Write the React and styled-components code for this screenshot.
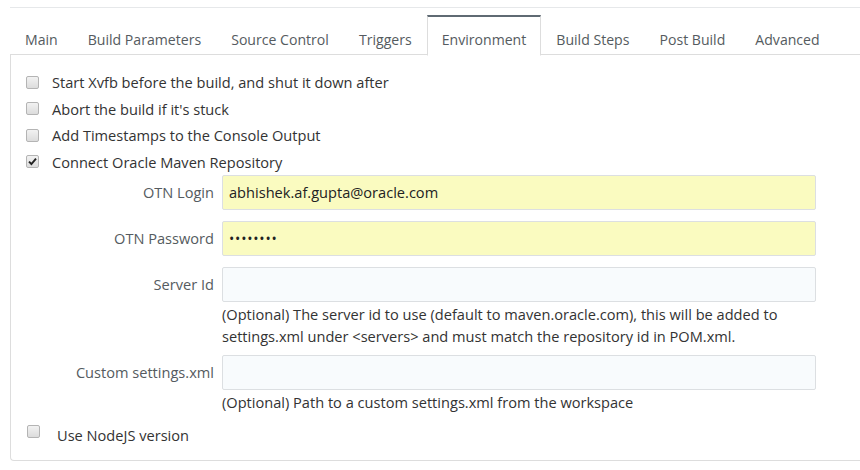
import styled, { createGlobalStyle } from "styled-components";

const GlobalStyle = createGlobalStyle`
    body {
        margin: 0;
        background: #ffffff;
        font-family: 'Open Sans', 'Liberation Sans', sans-serif;
        color: #333333;
    }
`;

const tabs = ["Main", "Build Parameters", "Source Control", "Triggers", "Environment", "Build Steps", "Post Build", "Advanced"];

export default function App() {
    return (
        <Page>
            <GlobalStyle />
            <TopRule />
            <TabBar>
                {tabs.map((t) => (
                    <Tab key={t} $active={t === "Environment"}>{t}</Tab>
                ))}
            </TabBar>
            <Panel>
                <CheckRow><Box /> Start Xvfb before the build, and shut it down after</CheckRow>
                <CheckRow><Box /> Abort the build if it's stuck</CheckRow>
                <CheckRow><Box /> Add Timestamps to the Console Output</CheckRow>
                <CheckRow><Box $checked>
                    <svg width="9" height="9" viewBox="0 0 9 9">
                        <path d="M1 4.6 L3.4 7 L8 1.6" fill="none" stroke="#222" strokeWidth="1.9" />
                    </svg>
                </Box> Connect Oracle Maven Repository</CheckRow>

                <Form>
                    <Label>OTN Login</Label>
                    <Field $filled>abhishek.af.gupta@oracle.com</Field>

                    <Label>OTN Password</Label>
                    <Field $filled $secret>••••••••</Field>

                    <Label>Server Id</Label>
                    <div>
                        <Field />
                        <Help>(Optional) The server id to use (default to maven.oracle.com), this will be added to settings.xml under &lt;servers&gt; and must match the repository id in POM.xml.</Help>
                    </div>

                    <Label>Custom settings.xml</Label>
                    <div>
                        <Field />
                        <Help>(Optional) Path to a custom settings.xml from the workspace</Help>
                    </div>
                </Form>

                <NodeRow><Box /><span>Use NodeJS version</span></NodeRow>
            </Panel>
        </Page>
    );
}

const Page = styled.div`
    padding: 7px 0 0 10px;
    width: 850px;
`;

const TopRule = styled.div`
    border-top: 1px solid #e6e8ea;
`;

const TabBar = styled.div`
    display: flex;
    margin-top: 7px;
    border-bottom: 1px solid #dddddd;
    height: 40px;
    box-sizing: border-box;
`;

const Tab = styled.div`
    box-sizing: border-box;
    height: 40px;
    padding: 13px 14px 0;
    border: 1px solid transparent;
    border-top: 2px solid transparent;
    font-size: 14.1px;
    line-height: 20px;
    color: #555b60;
    white-space: nowrap;
    ${(p) => p.$active && `
        border-color: #dddddd;
        border-top-color: #5f6a73;
        border-bottom: 1px solid #ffffff;
        height: 41px;
        margin-bottom: -1px;
        background: #ffffff;
    `}
`;

const Panel = styled.div`
    border-left: 1px solid #dddddd;
    border-bottom: 1px solid #dddddd;
    border-bottom-left-radius: 4px;
    height: 406px;
    box-sizing: border-box;
    padding: 14px 0 0 15px;
`;

const CheckRow = styled.div`
    display: flex;
    align-items: center;
    height: 26.5px;
    font-size: 14.6px;
    color: #333333;
    gap: 13px;
`;

const Box = styled.span`
    width: 11px;
    height: 11px;
    border: 1px solid #b4b4b4;
    border-radius: 2px;
    background: linear-gradient(#f2f2f2, #dcdcdc);
    display: inline-flex;
    align-items: center;
    justify-content: center;
    flex-shrink: 0;
`;

const Form = styled.div`
    display: grid;
    grid-template-columns: 188px 594px;
    column-gap: 8px;
    row-gap: 11px;
    align-items: start;
`;

const Label = styled.div`
    text-align: right;
    font-size: 14.6px;
    color: #555b60;
    line-height: 35px;
`;

const Field = styled.div`
    box-sizing: border-box;
    height: 35px;
    border: 1px solid #dcdfe2;
    border-radius: 2px;
    background: ${(p) => (p.$filled ? "#fafbc0" : "#f8fbfd")};
    padding: 0 6px;
    font-size: ${(p) => (p.$secret ? "14px" : "14.6px")};
    line-height: 33px;
    color: #222222;
    letter-spacing: ${(p) => (p.$secret ? "0.8px" : "0")};
`;

const Help = styled.div`
    font-size: 14.6px;
    line-height: 22px;
    color: #333333;
    padding-top: 1px;
    margin-bottom: -3px;
`;

const NodeRow = styled.div`
    display: flex;
    align-items: flex-start;
    gap: 17px;
    margin-top: 11px;
    padding-left: 1px;
    font-size: 14.6px;
    span {
        line-height: 20px;
        margin-top: 4px;
    }
`;
